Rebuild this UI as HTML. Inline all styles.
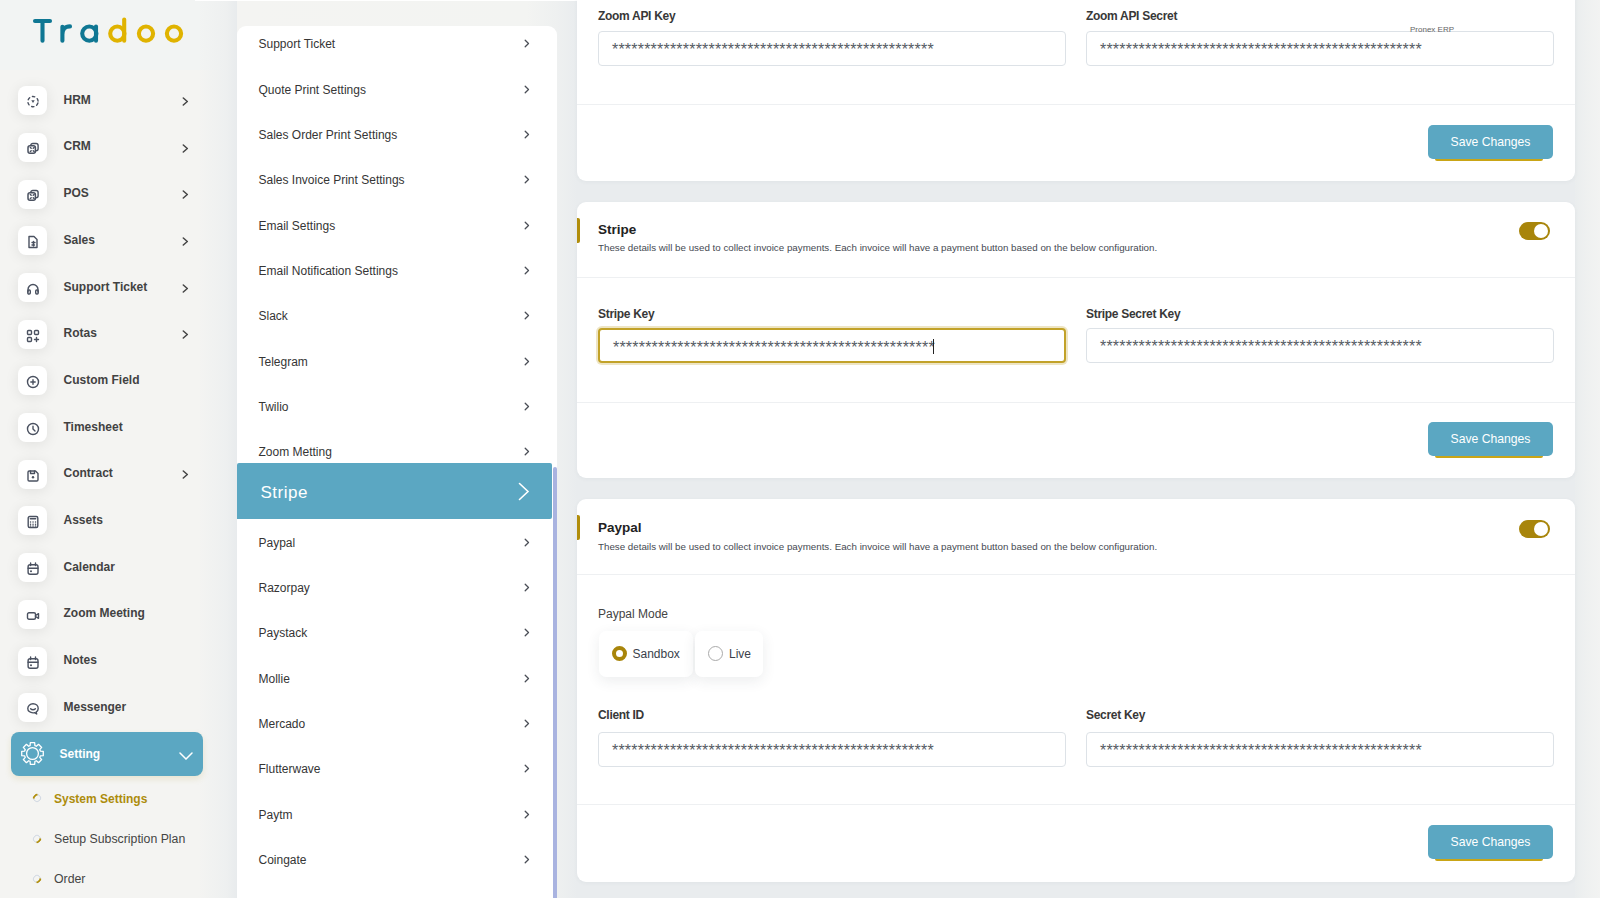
<!DOCTYPE html>
<html><head><meta charset="utf-8">
<style>
*{box-sizing:border-box;margin:0;padding:0}
html,body{width:1600px;height:898px;overflow:hidden}
body{font-family:"Liberation Sans",sans-serif;background:#e9ecee;position:relative;color:#333}
.t{position:absolute;white-space:nowrap;line-height:normal}
svg{display:block}
#sidebar{position:absolute;left:0;top:0;width:237px;height:898px;background:linear-gradient(90deg,#f4f4f2 0,#f4f4f2 198px,#eef0f0 226px,#e8ebed 237px)}
#pcol{position:absolute;left:237px;top:0;width:340px;height:898px;background:linear-gradient(90deg,#f4f4f2 0,#f3f4f2 290px,#eef0f0 320px,#e9ecee 340px)}
#rcol{position:absolute;left:1575px;top:0;width:25px;height:898px;background:linear-gradient(90deg,#eaedee 0,#eef0f0 10px,#f2f3f2 25px)}
#topline{position:absolute;left:195px;top:0;width:382px;height:1px;background:#fff}
#logo{position:absolute;left:0;top:0}
#logobg{position:absolute;left:0;top:0;width:237px;height:70px;background:linear-gradient(90deg,#f2f4f3 0,#f2f4f3 198px,#eef0f0 226px,#e8ebed 237px)}
.mclip{position:absolute;left:0;top:70px;width:237px;overflow:hidden}
.ib{position:absolute;left:18px;width:29px;height:29px;background:#fff;border-radius:8px;box-shadow:0 2px 14px rgba(0,0,0,.085)}
.ib svg{position:absolute;left:8px;top:9px}
.lb{font-weight:bold;color:#424242}
.ch{position:absolute;left:182px}
#panel{position:absolute;left:237px;top:26px;width:320px;height:900px;background:#fff;border-radius:9px 9px 0 0}
.pi{color:#353535}
.pch{position:absolute;left:287px}
.card{position:absolute;left:577px;width:998px;background:#fff;border-radius:9px;box-shadow:0 1px 4px rgba(60,80,100,.05)}
.lbl{font-weight:bold;color:#383838;letter-spacing:-0.3px}
.inp{position:absolute;width:468px;height:35px;border:1px solid #dde2e7;border-radius:4px;background:#fff}
.stars{position:absolute;left:13px;top:9px;font-size:16px;letter-spacing:0.21px;color:#555b63;white-space:nowrap;line-height:normal}
.hr{position:absolute;left:0;width:998px;height:1px;background:#eef0f2}
.btn{position:absolute;left:851px;width:125px;height:34px;background:#5ba7c2;border-radius:5px;color:#fff;font-size:12.2px;text-align:center;line-height:34px}
.btn i{position:absolute;left:7px;right:10px;bottom:-2px;height:2px;background:#c9a516;border-radius:0 0 3px 3px}
.gbar{position:absolute;left:0;width:3px;height:25px;background:#b08d0b;border-radius:0 2px 2px 0}
.ttl{font-weight:bold;color:#222}
.desc{color:#464a52}
.tog{position:absolute;left:942px;width:31px;height:18px;border-radius:9px;background:#a8850b}
.tog b{position:absolute;right:2px;top:2px;width:14px;height:14px;border-radius:50%;background:#fff}
.pronex{color:#666}
.caret{position:absolute;left:332.5px;top:8.5px;width:1.2px;height:15px;background:#222}
.rb{position:absolute;height:46px;background:#fff;border-radius:7px;box-shadow:0 4px 14px rgba(40,50,70,.09)}
.rad{position:absolute;left:13px;top:15px;width:15px;height:15px;border-radius:50%;border:1px solid #aaa;background:#fff}
.rad.on{border:4.5px solid #a8850b}
.pact{position:absolute;left:0;top:437px;width:315px;height:56px;background:#5ba7c2;border-radius:2px 2px 2px 0}
.bigch{position:absolute;left:281px;top:19px}
.sbar{position:absolute;left:316px;top:441px;width:4px;height:500px;background:#a9b3e0;border-radius:2px}
.setact{position:absolute;left:11px;top:732px;width:192px;height:44px;background:#5ba7c2;border-radius:8px;box-shadow:0 3px 6px rgba(180,160,60,.18)}
.gear{position:absolute;left:9px;top:9px}
.dch{position:absolute;left:168px;top:20px}
.sub{color:#444}
.dot{position:absolute;left:32.5px;width:8px;height:8px;border-radius:50%;border:1.8px solid #d2d9e3;transform:rotate(-45deg)}
.dot.a{border-top:2.2px solid #b08e0c}
.dot.b{border-bottom:2.2px solid #b08e0c}
</style></head><body>
<div id="sidebar">

<div id="logobg"></div>
<svg id="logo" width="200" height="60" viewBox="0 0 200 60" fill="none" stroke-width="4.1" stroke-linecap="round">
<path d="M35 21H50M42.5 21V40.7" stroke="#0f7793"/>
<path d="M62.4 40.7V26.8M62.4 34.5C62.4 29.2 65 26.4 70 26.4" stroke="#0f7793"/>
<circle cx="89.3" cy="33.6" r="7.1" stroke="#0f7793"/><path d="M96 26.5V40.7" stroke="#0f7793"/>
<circle cx="117.3" cy="33.6" r="7.1" stroke="#e0b300"/><path d="M124.2 19.6V40.8" stroke="#e0b300"/>
<circle cx="146" cy="33.6" r="7.1" stroke="#e0b300"/>
<circle cx="174" cy="33.6" r="7.1" stroke="#e0b300"/>
</svg>
<div class="mclip" style="height:57.8px"><div class="ib" style="top:16.3px"><svg width="14" height="14" viewBox="0 0 14 14"><circle cx="7" cy="6.6" r="5.1" stroke="#4a5160" fill="none" stroke-width="1.4" stroke-linecap="round" stroke-linejoin="round" stroke-width="2" stroke-dasharray="2.4 2.94" stroke-dashoffset="-1.47" stroke-linecap="butt"/><path d="M5.3 5.3h3.4L7 7.9z" fill="#4a5160"/></svg></div></div>
<div class="t lb" style="left:63.5px;top:92.8px;font-size:12px;">HRM</div>
<div class="ch" style="top:97.0px"><svg width="7" height="9" viewBox="0 0 7 9"><path d="M1.3 1l4 3.5-4 3.5" stroke="#444" stroke-width="1.5" fill="none" stroke-linecap="round" stroke-linejoin="round"/></svg></div>
<div class="mclip" style="height:104.5px"><div class="ib" style="top:63.0px"><svg width="14" height="14" viewBox="0 0 14 14"><rect x="4.8" y="1.5" width="7.3" height="7.3" rx="2" stroke="#4a5160" fill="none" stroke-width="1.4" stroke-linecap="round" stroke-linejoin="round"/><rect x="2" y="3.8" width="7.4" height="7.4" rx="2" stroke="#4a5160" fill="#fff" stroke-width="1.5"/><path d="M4.3 5.4l.9.9M8.1 5.4l-.9.9M4.3 9.6l.9-.9M8.1 9.6l-.9-.9" stroke="#4a5160" fill="none" stroke-width="1.4" stroke-linecap="round" stroke-linejoin="round" stroke-width="1.1"/></svg></div></div>
<div class="t lb" style="left:63.5px;top:139.48px;font-size:12px;">CRM</div>
<div class="ch" style="top:143.7px"><svg width="7" height="9" viewBox="0 0 7 9"><path d="M1.3 1l4 3.5-4 3.5" stroke="#444" stroke-width="1.5" fill="none" stroke-linecap="round" stroke-linejoin="round"/></svg></div>
<div class="mclip" style="height:151.2px"><div class="ib" style="top:109.7px"><svg width="14" height="14" viewBox="0 0 14 14"><rect x="4.8" y="1.5" width="7.3" height="7.3" rx="2" stroke="#4a5160" fill="none" stroke-width="1.4" stroke-linecap="round" stroke-linejoin="round"/><rect x="2" y="3.8" width="7.4" height="7.4" rx="2" stroke="#4a5160" fill="#fff" stroke-width="1.5"/><path d="M4.3 5.4l.9.9M8.1 5.4l-.9.9M4.3 9.6l.9-.9M8.1 9.6l-.9-.9" stroke="#4a5160" fill="none" stroke-width="1.4" stroke-linecap="round" stroke-linejoin="round" stroke-width="1.1"/></svg></div></div>
<div class="t lb" style="left:63.5px;top:186.16px;font-size:12px;">POS</div>
<div class="ch" style="top:190.4px"><svg width="7" height="9" viewBox="0 0 7 9"><path d="M1.3 1l4 3.5-4 3.5" stroke="#444" stroke-width="1.5" fill="none" stroke-linecap="round" stroke-linejoin="round"/></svg></div>
<div class="mclip" style="height:197.8px"><div class="ib" style="top:156.3px"><svg width="14" height="14" viewBox="0 0 14 14"><path d="M3 1.5h5l3 3v8H3z" stroke="#4a5160" fill="none" stroke-width="1.4" stroke-linecap="round" stroke-linejoin="round"/><path d="M6 7.5h3M6 10h2.5M7.5 6.5v4.5" stroke="#4a5160" fill="none" stroke-width="1.4" stroke-linecap="round" stroke-linejoin="round" stroke-width="1.2"/></svg></div></div>
<div class="t lb" style="left:63.5px;top:232.83999999999997px;font-size:12px;">Sales</div>
<div class="ch" style="top:237.0px"><svg width="7" height="9" viewBox="0 0 7 9"><path d="M1.3 1l4 3.5-4 3.5" stroke="#444" stroke-width="1.5" fill="none" stroke-linecap="round" stroke-linejoin="round"/></svg></div>
<div class="mclip" style="height:244.5px"><div class="ib" style="top:203.0px"><svg width="14" height="14" viewBox="0 0 14 14"><path d="M2 10V7.5a5 5 0 0 1 10 0V10" stroke="#4a5160" fill="none" stroke-width="1.4" stroke-linecap="round" stroke-linejoin="round"/><rect x="1.8" y="8" width="2.5" height="4" rx="1" stroke="#4a5160" fill="none" stroke-width="1.4" stroke-linecap="round" stroke-linejoin="round"/><rect x="9.7" y="8" width="2.5" height="4" rx="1" stroke="#4a5160" fill="none" stroke-width="1.4" stroke-linecap="round" stroke-linejoin="round"/></svg></div></div>
<div class="t lb" style="left:63.5px;top:279.52px;font-size:12px;">Support Ticket</div>
<div class="ch" style="top:283.7px"><svg width="7" height="9" viewBox="0 0 7 9"><path d="M1.3 1l4 3.5-4 3.5" stroke="#444" stroke-width="1.5" fill="none" stroke-linecap="round" stroke-linejoin="round"/></svg></div>
<div class="mclip" style="height:291.2px"><div class="ib" style="top:249.7px"><svg width="14" height="14" viewBox="0 0 14 14"><rect x="1.5" y="1.5" width="4" height="4" rx="1" stroke="#4a5160" fill="none" stroke-width="1.4" stroke-linecap="round" stroke-linejoin="round"/><rect x="8.5" y="1.5" width="4" height="4" rx="1" stroke="#4a5160" fill="none" stroke-width="1.4" stroke-linecap="round" stroke-linejoin="round"/><rect x="1.5" y="8.5" width="4" height="4" rx="1" stroke="#4a5160" fill="none" stroke-width="1.4" stroke-linecap="round" stroke-linejoin="round"/><path d="M10.5 8.5v4M8.5 10.5h4" stroke="#4a5160" fill="none" stroke-width="1.4" stroke-linecap="round" stroke-linejoin="round"/></svg></div></div>
<div class="t lb" style="left:63.5px;top:326.2px;font-size:12px;">Rotas</div>
<div class="ch" style="top:330.4px"><svg width="7" height="9" viewBox="0 0 7 9"><path d="M1.3 1l4 3.5-4 3.5" stroke="#444" stroke-width="1.5" fill="none" stroke-linecap="round" stroke-linejoin="round"/></svg></div>
<div class="mclip" style="height:337.9px"><div class="ib" style="top:296.4px"><svg width="14" height="14" viewBox="0 0 14 14"><circle cx="7" cy="7" r="5.5" stroke="#4a5160" fill="none" stroke-width="1.4" stroke-linecap="round" stroke-linejoin="round"/><path d="M7 4.8v4.4M4.8 7h4.4" stroke="#4a5160" fill="none" stroke-width="1.4" stroke-linecap="round" stroke-linejoin="round"/></svg></div></div>
<div class="t lb" style="left:63.5px;top:372.88px;font-size:12px;">Custom Field</div>
<div class="mclip" style="height:384.6px"><div class="ib" style="top:343.1px"><svg width="14" height="14" viewBox="0 0 14 14"><circle cx="7" cy="7" r="5.5" stroke="#4a5160" fill="none" stroke-width="1.4" stroke-linecap="round" stroke-linejoin="round"/><path d="M7 4.2V7l2 2" stroke="#4a5160" fill="none" stroke-width="1.4" stroke-linecap="round" stroke-linejoin="round"/></svg></div></div>
<div class="t lb" style="left:63.5px;top:419.56px;font-size:12px;">Timesheet</div>
<div class="mclip" style="height:431.2px"><div class="ib" style="top:389.7px"><svg width="14" height="14" viewBox="0 0 14 14"><path d="M2 3.2a1.2 1.2 0 0 1 1.2-1.2h6.3L12 4.5v6.3a1.2 1.2 0 0 1-1.2 1.2H3.2A1.2 1.2 0 0 1 2 10.8z" stroke="#4a5160" fill="none" stroke-width="1.4" stroke-linecap="round" stroke-linejoin="round"/><path d="M4.5 2v2.5h4V2" stroke="#4a5160" fill="none" stroke-width="1.4" stroke-linecap="round" stroke-linejoin="round" stroke-width="1.2"/><circle cx="7" cy="8.3" r="1.2" fill="#4a5160"/></svg></div></div>
<div class="t lb" style="left:63.5px;top:466.24px;font-size:12px;">Contract</div>
<div class="ch" style="top:470.4px"><svg width="7" height="9" viewBox="0 0 7 9"><path d="M1.3 1l4 3.5-4 3.5" stroke="#444" stroke-width="1.5" fill="none" stroke-linecap="round" stroke-linejoin="round"/></svg></div>
<div class="mclip" style="height:477.9px"><div class="ib" style="top:436.4px"><svg width="14" height="14" viewBox="0 0 14 14"><rect x="2.2" y="1.5" width="9.6" height="11" rx="1.5" stroke="#4a5160" fill="none" stroke-width="1.4" stroke-linecap="round" stroke-linejoin="round"/><path d="M4.3 3.8h5.4" stroke="#4a5160" fill="none" stroke-width="1.4" stroke-linecap="round" stroke-linejoin="round" stroke-width="1.8"/><path d="M4.5 7h.1M7 7h.1M9.5 7h.1M4.5 9.2h.1M7 9.2h.1M9.5 9.2h.1M4.5 11h.1M7 11h.1M9.5 11h.1" stroke="#4a5160" fill="none" stroke-width="1.4" stroke-linecap="round" stroke-linejoin="round" stroke-width="1.1"/></svg></div></div>
<div class="t lb" style="left:63.5px;top:512.92px;font-size:12px;">Assets</div>
<div class="mclip" style="height:524.6px"><div class="ib" style="top:483.1px"><svg width="14" height="14" viewBox="0 0 14 14"><rect x="2.1" y="2.7" width="9.9" height="9.6" rx="2" stroke="#4a5160" fill="none" stroke-width="1.4" stroke-linecap="round" stroke-linejoin="round"/><path d="M2.1 6.3h9.9M4.6 1v2.6M9.5 1v2.6" stroke="#4a5160" fill="none" stroke-width="1.4" stroke-linecap="round" stroke-linejoin="round"/><circle cx="5" cy="9.2" r="1" fill="#4a5160"/></svg></div></div>
<div class="t lb" style="left:63.5px;top:559.6px;font-size:12px;">Calendar</div>
<div class="mclip" style="height:571.3px"><div class="ib" style="top:529.8px"><svg width="14" height="14" viewBox="0 0 14 14"><rect x="1.5" y="3.8" width="8" height="6.5" rx="1.5" stroke="#4a5160" fill="none" stroke-width="1.4" stroke-linecap="round" stroke-linejoin="round"/><path d="M9.5 6.5l3-1.8v4.6l-3-1.8" stroke="#4a5160" fill="none" stroke-width="1.4" stroke-linecap="round" stroke-linejoin="round"/></svg></div></div>
<div class="t lb" style="left:63.5px;top:606.28px;font-size:12px;">Zoom Meeting</div>
<div class="mclip" style="height:618.0px"><div class="ib" style="top:576.5px"><svg width="14" height="14" viewBox="0 0 14 14"><rect x="2.1" y="2.7" width="9.9" height="9.6" rx="2" stroke="#4a5160" fill="none" stroke-width="1.4" stroke-linecap="round" stroke-linejoin="round"/><path d="M2.1 6.3h9.9M4.6 1v2.6M9.5 1v2.6" stroke="#4a5160" fill="none" stroke-width="1.4" stroke-linecap="round" stroke-linejoin="round"/><circle cx="5" cy="9.2" r="1" fill="#4a5160"/></svg></div></div>
<div class="t lb" style="left:63.5px;top:652.9599999999999px;font-size:12px;">Notes</div>
<div class="mclip" style="height:664.6px"><div class="ib" style="top:623.1px"><svg width="14" height="14" viewBox="0 0 14 14"><path d="M7 1.8c3 0 5.2 2 5.2 4.6 0 1.6-.8 2.9-2.1 3.7l.6 1.9-2.2-1.3c-.5.1-1 .2-1.5.2-3 0-5.2-2-5.2-4.5S4 1.8 7 1.8z" stroke="#4a5160" fill="none" stroke-width="1.4" stroke-linecap="round" stroke-linejoin="round"/><path d="M4.6 6.8c1.3 1.3 3.5 1.3 4.8 0" stroke="#4a5160" fill="none" stroke-width="1.4" stroke-linecap="round" stroke-linejoin="round"/></svg></div></div>
<div class="t lb" style="left:63.5px;top:699.64px;font-size:12px;">Messenger</div>
<div class="setact"><svg class="gear" width="25" height="25" viewBox="0 0 25 25"><path d="M10.10 4.66L10.31 1.72L14.69 1.72L14.90 4.66A8.2 8.2 0 0 1 16.35 5.26L18.57 3.33L21.67 6.43L19.74 8.65A8.2 8.2 0 0 1 20.34 10.10L23.28 10.31L23.28 14.69L20.34 14.90A8.2 8.2 0 0 1 19.74 16.35L21.67 18.57L18.57 21.67L16.35 19.74A8.2 8.2 0 0 1 14.90 20.34L14.69 23.28L10.31 23.28L10.10 20.34A8.2 8.2 0 0 1 8.65 19.74L6.43 21.67L3.33 18.57L5.26 16.35A8.2 8.2 0 0 1 4.66 14.90L1.72 14.69L1.72 10.31L4.66 10.10A8.2 8.2 0 0 1 5.26 8.65L3.33 6.43L6.43 3.33L8.65 5.26A8.2 8.2 0 0 1 10.10 4.66Z" stroke="#fff" stroke-width="1.3" fill="none" stroke-linejoin="round"/><circle cx="12.5" cy="12.5" r="5.9" stroke="#fff" stroke-width="1.3" fill="none"/></svg><svg class="dch" width="14" height="8" viewBox="0 0 14 8"><path d="M1 1l6 6 6-6" stroke="#fff" stroke-width="1.5" fill="none" stroke-linecap="round"/></svg></div>
<div class="t lb" style="left:59.5px;top:747.2px;font-size:12px;color:#fff">Setting</div>
<div class="t sub" style="left:54px;top:792.2px;font-size:12px;color:#ad8c0c;font-weight:bold">System Settings</div>
<div class="dot a" style="top:793.5px"></div>
<div class="t sub" style="left:54px;top:832px;font-size:12.3px;">Setup Subscription Plan</div>
<div class="dot b" style="top:834.5px"></div>
<div class="t sub" style="left:54px;top:871.8px;font-size:12.3px;">Order</div>
<div class="dot b" style="top:874.5px"></div>
</div>
<div id="pcol"></div><div id="rcol"></div><div id="topline"></div>
<div id="panel">
<div class="t pi" style="left:21.5px;top:11.399999999999999px;font-size:12px;">Support Ticket</div>
<div class="pch" style="top:13.4px"><svg width="6" height="9" viewBox="0 0 6 9"><path d="M1.2 1.2l3.3 3.3-3.3 3.3" stroke="#4a4e56" stroke-width="1.3" fill="none" stroke-linecap="round" stroke-linejoin="round"/></svg></div>
<div class="t pi" style="left:21.5px;top:56.69999999999999px;font-size:12px;">Quote Print Settings</div>
<div class="pch" style="top:58.7px"><svg width="6" height="9" viewBox="0 0 6 9"><path d="M1.2 1.2l3.3 3.3-3.3 3.3" stroke="#4a4e56" stroke-width="1.3" fill="none" stroke-linecap="round" stroke-linejoin="round"/></svg></div>
<div class="t pi" style="left:21.5px;top:102.0px;font-size:12px;">Sales Order Print Settings</div>
<div class="pch" style="top:104.0px"><svg width="6" height="9" viewBox="0 0 6 9"><path d="M1.2 1.2l3.3 3.3-3.3 3.3" stroke="#4a4e56" stroke-width="1.3" fill="none" stroke-linecap="round" stroke-linejoin="round"/></svg></div>
<div class="t pi" style="left:21.5px;top:147.29999999999998px;font-size:12px;">Sales Invoice Print Settings</div>
<div class="pch" style="top:149.3px"><svg width="6" height="9" viewBox="0 0 6 9"><path d="M1.2 1.2l3.3 3.3-3.3 3.3" stroke="#4a4e56" stroke-width="1.3" fill="none" stroke-linecap="round" stroke-linejoin="round"/></svg></div>
<div class="t pi" style="left:21.5px;top:192.6px;font-size:12px;">Email Settings</div>
<div class="pch" style="top:194.6px"><svg width="6" height="9" viewBox="0 0 6 9"><path d="M1.2 1.2l3.3 3.3-3.3 3.3" stroke="#4a4e56" stroke-width="1.3" fill="none" stroke-linecap="round" stroke-linejoin="round"/></svg></div>
<div class="t pi" style="left:21.5px;top:237.89999999999998px;font-size:12px;">Email Notification Settings</div>
<div class="pch" style="top:239.9px"><svg width="6" height="9" viewBox="0 0 6 9"><path d="M1.2 1.2l3.3 3.3-3.3 3.3" stroke="#4a4e56" stroke-width="1.3" fill="none" stroke-linecap="round" stroke-linejoin="round"/></svg></div>
<div class="t pi" style="left:21.5px;top:283.19999999999993px;font-size:12px;">Slack</div>
<div class="pch" style="top:285.2px"><svg width="6" height="9" viewBox="0 0 6 9"><path d="M1.2 1.2l3.3 3.3-3.3 3.3" stroke="#4a4e56" stroke-width="1.3" fill="none" stroke-linecap="round" stroke-linejoin="round"/></svg></div>
<div class="t pi" style="left:21.5px;top:328.49999999999994px;font-size:12px;">Telegram</div>
<div class="pch" style="top:330.5px"><svg width="6" height="9" viewBox="0 0 6 9"><path d="M1.2 1.2l3.3 3.3-3.3 3.3" stroke="#4a4e56" stroke-width="1.3" fill="none" stroke-linecap="round" stroke-linejoin="round"/></svg></div>
<div class="t pi" style="left:21.5px;top:373.79999999999995px;font-size:12px;">Twilio</div>
<div class="pch" style="top:375.8px"><svg width="6" height="9" viewBox="0 0 6 9"><path d="M1.2 1.2l3.3 3.3-3.3 3.3" stroke="#4a4e56" stroke-width="1.3" fill="none" stroke-linecap="round" stroke-linejoin="round"/></svg></div>
<div class="t pi" style="left:21.5px;top:419.09999999999997px;font-size:12px;">Zoom Metting</div>
<div class="pch" style="top:421.1px"><svg width="6" height="9" viewBox="0 0 6 9"><path d="M1.2 1.2l3.3 3.3-3.3 3.3" stroke="#4a4e56" stroke-width="1.3" fill="none" stroke-linecap="round" stroke-linejoin="round"/></svg></div>
<div class="t pi" style="left:21.5px;top:509.69999999999993px;font-size:12px;">Paypal</div>
<div class="pch" style="top:511.7px"><svg width="6" height="9" viewBox="0 0 6 9"><path d="M1.2 1.2l3.3 3.3-3.3 3.3" stroke="#4a4e56" stroke-width="1.3" fill="none" stroke-linecap="round" stroke-linejoin="round"/></svg></div>
<div class="t pi" style="left:21.5px;top:554.9999999999999px;font-size:12px;">Razorpay</div>
<div class="pch" style="top:557.0px"><svg width="6" height="9" viewBox="0 0 6 9"><path d="M1.2 1.2l3.3 3.3-3.3 3.3" stroke="#4a4e56" stroke-width="1.3" fill="none" stroke-linecap="round" stroke-linejoin="round"/></svg></div>
<div class="t pi" style="left:21.5px;top:600.3px;font-size:12px;">Paystack</div>
<div class="pch" style="top:602.3px"><svg width="6" height="9" viewBox="0 0 6 9"><path d="M1.2 1.2l3.3 3.3-3.3 3.3" stroke="#4a4e56" stroke-width="1.3" fill="none" stroke-linecap="round" stroke-linejoin="round"/></svg></div>
<div class="t pi" style="left:21.5px;top:645.5999999999999px;font-size:12px;">Mollie</div>
<div class="pch" style="top:647.6px"><svg width="6" height="9" viewBox="0 0 6 9"><path d="M1.2 1.2l3.3 3.3-3.3 3.3" stroke="#4a4e56" stroke-width="1.3" fill="none" stroke-linecap="round" stroke-linejoin="round"/></svg></div>
<div class="t pi" style="left:21.5px;top:690.9px;font-size:12px;">Mercado</div>
<div class="pch" style="top:692.9px"><svg width="6" height="9" viewBox="0 0 6 9"><path d="M1.2 1.2l3.3 3.3-3.3 3.3" stroke="#4a4e56" stroke-width="1.3" fill="none" stroke-linecap="round" stroke-linejoin="round"/></svg></div>
<div class="t pi" style="left:21.5px;top:736.1999999999999px;font-size:12px;">Flutterwave</div>
<div class="pch" style="top:738.2px"><svg width="6" height="9" viewBox="0 0 6 9"><path d="M1.2 1.2l3.3 3.3-3.3 3.3" stroke="#4a4e56" stroke-width="1.3" fill="none" stroke-linecap="round" stroke-linejoin="round"/></svg></div>
<div class="t pi" style="left:21.5px;top:781.4999999999999px;font-size:12px;">Paytm</div>
<div class="pch" style="top:783.5px"><svg width="6" height="9" viewBox="0 0 6 9"><path d="M1.2 1.2l3.3 3.3-3.3 3.3" stroke="#4a4e56" stroke-width="1.3" fill="none" stroke-linecap="round" stroke-linejoin="round"/></svg></div>
<div class="t pi" style="left:21.5px;top:826.8px;font-size:12px;">Coingate</div>
<div class="pch" style="top:828.8px"><svg width="6" height="9" viewBox="0 0 6 9"><path d="M1.2 1.2l3.3 3.3-3.3 3.3" stroke="#4a4e56" stroke-width="1.3" fill="none" stroke-linecap="round" stroke-linejoin="round"/></svg></div>
<div class="pact"><svg class="bigch" width="12" height="19" viewBox="0 0 12 19"><path d="M1.5 1.5l8.5 8-8.5 8" stroke="#fff" stroke-width="1.6" fill="none" stroke-linecap="round"/></svg></div>
<div class="t " style="left:23.5px;top:456.6px;font-size:17px;color:#fff;letter-spacing:0.5px">Stripe</div>
<div class="sbar"></div>
</div>
<div class="card" style="top:-20px;height:201px">
<div class="t lbl" style="left:21px;top:29px;font-size:12px;">Zoom API Key</div><div class="t lbl" style="left:509px;top:29px;font-size:12px;">Zoom API Secret</div>
<div class="inp" style="left:21px;top:51px;"><div class="stars">**************************************************</div></div><div class="inp" style="left:509px;top:51px;"><div class="stars">**************************************************</div></div>
<div class="hr" style="top:124px"></div>
<div class="btn" style="top:145px"><i></i>Save Changes</div>
<div class="t pronex" style="left:833px;top:45px;font-size:8px;">Pronex ERP</div>
</div>
<div class="card" style="top:202px;height:276px">
<div class="gbar" style="top:16px"></div>
<div class="t ttl" style="left:21px;top:20.400000000000006px;font-size:13.5px;">Stripe</div><div class="t desc" style="left:21px;top:40.30000000000001px;font-size:9.77px;">These details will be used to collect invoice payments. Each invoice will have a payment button based on the below configuration.</div>
<div class="tog" style="top:20px"><b></b></div>
<div class="hr" style="top:75px"></div>
<div class="t lbl" style="left:21px;top:104.5px;font-size:12px;">Stripe Key</div><div class="t lbl" style="left:509px;top:104.5px;font-size:12px;">Stripe Secret Key</div>
<div class="inp" style="left:21px;top:126px;border:2px solid #c2a229;box-shadow:0 0 0 2px rgba(200,170,60,.3)"><div class="stars">**************************************************</div><span class="caret"></span></div><div class="inp" style="left:509px;top:126px;"><div class="stars">**************************************************</div></div>
<div class="hr" style="top:200px"></div>
<div class="btn" style="top:220px"><i></i>Save Changes</div>
</div>
<div class="card" style="top:499px;height:383px">
<div class="gbar" style="top:16px"></div>
<div class="t ttl" style="left:21px;top:21px;font-size:13.5px;">Paypal</div><div class="t desc" style="left:21px;top:41.5px;font-size:9.77px;">These details will be used to collect invoice payments. Each invoice will have a payment button based on the below configuration.</div>
<div class="tog" style="top:21px"><b></b></div>
<div class="hr" style="top:75px"></div>
<div class="t " style="left:21px;top:107.79999999999995px;font-size:12px;color:#444">Paypal Mode</div>
<div class="rb" style="left:21.5px;top:132px;width:94px"><span class="rad on"></span></div>
<div class="rb" style="left:118px;top:132px;width:68px"><span class="rad"></span></div>
<div class="t " style="left:55.5px;top:147.60000000000002px;font-size:12px;color:#3a3f4a">Sandbox</div><div class="t " style="left:152px;top:147.60000000000002px;font-size:12px;color:#3a3f4a">Live</div>
<div class="t lbl" style="left:21px;top:209.39999999999998px;font-size:12px;">Client ID</div><div class="t lbl" style="left:509px;top:209.39999999999998px;font-size:12px;">Secret Key</div>
<div class="inp" style="left:21px;top:233px;"><div class="stars">**************************************************</div></div><div class="inp" style="left:509px;top:233px;"><div class="stars">**************************************************</div></div>
<div class="hr" style="top:305px"></div>
<div class="btn" style="top:326px"><i></i>Save Changes</div>
</div>
</body></html>
